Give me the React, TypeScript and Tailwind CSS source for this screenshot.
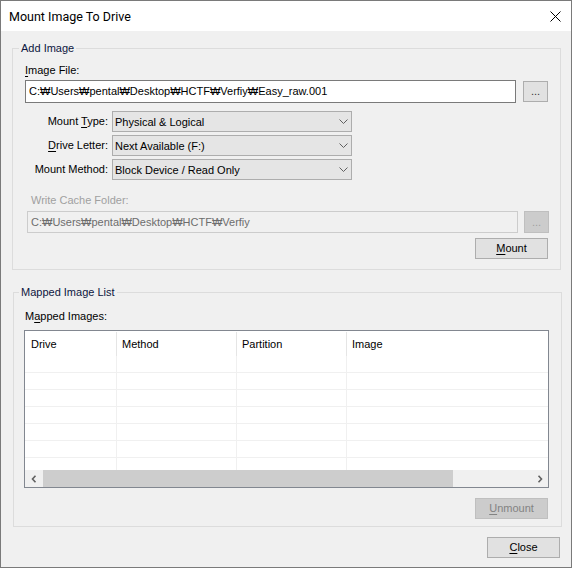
import React from "react";

const PATH1 = "C:₩Users₩pental₩Desktop₩HCTF₩Verfiy₩Easy_raw.001";
const PATH2 = "C:₩Users₩pental₩Desktop₩HCTF₩Verfiy";

function Chevron() {
  return (
    <svg width="9" height="5" viewBox="0 0 9 5" className="shrink-0">
      <path d="M0.5 0.5 L4.5 4.5 L8.5 0.5" fill="none" stroke="#606060" strokeWidth="1" />
    </svg>
  );
}

function Combo({ label, value }: { label: React.ReactNode; value: string }) {
  return (
    <div className="flex items-center">
      <div className="w-[95px] text-right whitespace-nowrap">{label}</div>
      <div className="ml-[4px] w-[240px] h-[21px] border border-[#adadad] bg-[#e5e5e5] flex items-center justify-between pl-[2px] pr-[3px]">
        <span className="whitespace-nowrap pt-[1px]">{value}</span>
        <Chevron />
      </div>
    </div>
  );
}

function U({ children }: { children: React.ReactNode }) {
  return <span className="underline underline-offset-[2px] decoration-1">{children}</span>;
}

const cols = ["w-[92px]", "w-[120px]", "w-[110px]", "flex-1"];

export default function App() {
  return (
    <div className="w-[572px] h-[568px] flex flex-col border border-[#7a7a7a] bg-[#f0f0f0] font-['Liberation_Sans',sans-serif] text-[11px] leading-[13px] text-black overflow-hidden">
      {/* Title bar */}
      <div className="h-[30px] shrink-0 bg-white flex items-center justify-between pl-[8px] pr-[10px]">
        <span className="font-['Roboto',sans-serif] text-[12.5px] leading-[15px] text-black">Mount Image To Drive</span>
        <svg width="11" height="11" viewBox="0 0 11 11">
          <path d="M0.5 0.5 L10.5 10.5 M10.5 0.5 L0.5 10.5" stroke="#000" strokeWidth="1" fill="none" />
        </svg>
      </div>

      {/* Add Image group */}
      <fieldset className="mt-[11px] ml-[11px] mr-[10px] border border-[#dcdcdc] pb-[10px]">
        <legend className="ml-[6px] px-[2px] leading-[13px] text-[#0d1640]">Add Image</legend>
        <div className="mt-[9px] pl-[12px]">
          <U>I</U>mage File:
        </div>
        <div className="mt-[3px] pl-[12px] flex items-start gap-[7px]">
          <div className="w-[491px] h-[23px] border border-[#7a7a7a] bg-white flex items-center pl-[3px] whitespace-nowrap overflow-hidden">
            {PATH1}
          </div>
          <button className="mt-[1px] w-[25px] h-[21px] border border-[#adadad] bg-[#e1e1e1] flex items-center justify-center text-[#333] leading-[13px]">
            ...
          </button>
        </div>
        <div className="mt-[8px] flex flex-col gap-[3px]">
          <Combo label={<>Mount <U>T</U>ype:</>} value="Physical & Logical" />
          <Combo label={<><U>D</U>rive Letter:</>} value="Next Available (F:)" />
          <Combo label={<>Mount Method:</>} value="Block Device / Read Only" />
        </div>
        <div className="mt-[14px] pl-[18px] text-[#a0a0a0]">Write Cache Folder:</div>
        <div className="mt-[4px] pl-[14px] flex items-start gap-[6px]">
          <div className="w-[491px] h-[22px] border border-[#cccccc] bg-[#f0f0f0] flex items-center pl-[3px] whitespace-nowrap overflow-hidden text-[#6d6d6d]">
            {PATH2}
          </div>
          <button className="w-[25px] h-[22px] border border-[#bfbfbf] bg-[#cccccc] flex items-center justify-center text-[#a0a0a0] leading-[13px]">
            ...
          </button>
        </div>
        <div className="mt-[5px] flex justify-end pr-[12px]">
          <button className="w-[73px] h-[21px] border border-[#adadad] bg-[#e1e1e1] flex items-center justify-center leading-[13px]">
            <span><U>M</U>ount</span>
          </button>
        </div>
      </fieldset>

      {/* Mapped Image List group */}
      <fieldset className="mt-[16px] ml-[12px] mr-[9px] border border-[#dcdcdc] pb-[7px]">
        <legend className="ml-[5px] px-[2px] leading-[13px] text-[#0d1640]">Mapped Image List</legend>
        <div className="mt-[11px] pl-[11px]">
          M<U>a</U>pped Images:
        </div>
        <div className="mt-[7px] ml-[10px] w-[525px] h-[158px] border border-[#828790] bg-white flex flex-col">
          <div className="h-[25px] flex shrink-0">
            {["Drive", "Method", "Partition", "Image"].map((h, i) => (
              <div
                key={h}
                className={`${cols[i]} ${i < 3 ? "border-r border-[#e5e5e5]" : ""} ${i === 0 ? "pl-[6px]" : "pl-[5px]"} mt-[1px] flex items-center`}
              >
                {h}
              </div>
            ))}
          </div>
          <div className="h-[114px] overflow-hidden">
            {Array.from({ length: 7 }).map((_, r) => (
              <div key={r} className="h-[17px] flex border-b border-[#f0f0f0]">
                {cols.map((c, i) => (
                  <div key={i} className={`${c} ${i < 3 ? "border-r border-[#f0f0f0]" : ""}`} />
                ))}
              </div>
            ))}
          </div>
          <div className="h-[17px] flex bg-[#f0f0f0] shrink-0">
            <div className="w-[17px] flex items-center justify-center pl-[1px]">
              <svg width="6" height="8" viewBox="0 0 6 8">
                <path d="M4.5 0.8 L1.5 4 L4.5 7.2" fill="none" stroke="#606060" strokeWidth="1.6" />
              </svg>
            </div>
            <div className="flex-1 flex">
              <div className="ml-[1px] w-[410px] h-full bg-[#cdcdcd]" />
            </div>
            <div className="w-[17px] flex items-center justify-center">
              <svg width="6" height="8" viewBox="0 0 6 8">
                <path d="M1.5 0.8 L4.5 4 L1.5 7.2" fill="none" stroke="#606060" strokeWidth="1.6" />
              </svg>
            </div>
          </div>
        </div>
        <div className="mt-[10px] flex justify-end pr-[13px]">
          <button className="w-[73px] h-[21px] border border-[#bfbfbf] bg-[#cccccc] flex items-center justify-center leading-[13px] text-[#838383]">
            <span><U>U</U>nmount</span>
          </button>
        </div>
      </fieldset>

      <div className="mt-[10px] flex justify-end pr-[11px]">
        <button className="w-[73px] h-[21px] border border-[#adadad] bg-[#e1e1e1] flex items-center justify-center leading-[13px]">
          <span><U>C</U>lose</span>
        </button>
      </div>
    </div>
  );
}
